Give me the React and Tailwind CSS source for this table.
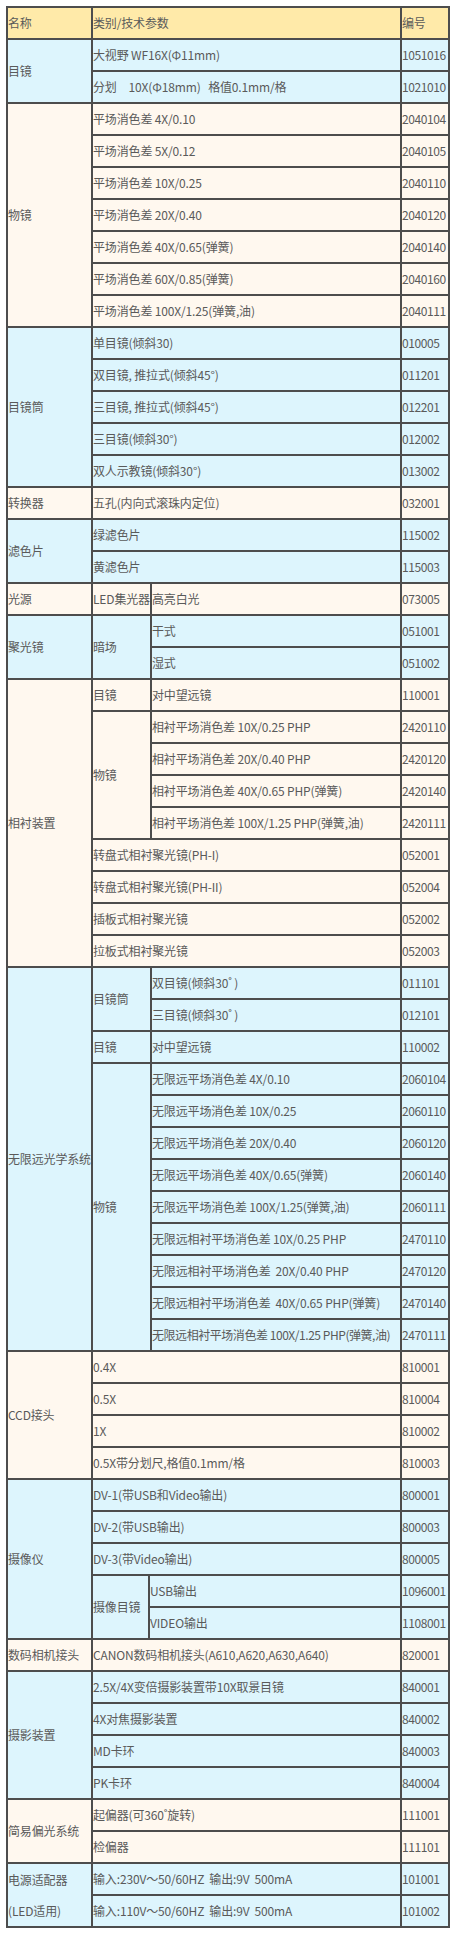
import React from "react";

const BLUE = "bg-[#ddf5fd]";
const CREAM = "bg-[#fff8ef]";

const cell =
  "box-border border border-[#4d4d4d] flex items-center whitespace-pre leading-[16px]";

const groups = [
  {
    name: ["目镜"],
    bg: BLUE,
    items: [
      ["大视野 WF16X(Φ11mm)", "1051016"],
      ["分划　10X(Φ18mm)   格值0.1mm/格", "1021010"],
    ],
  },
  {
    name: ["物镜"],
    bg: CREAM,
    items: [
      ["平场消色差 4X/0.10", "2040104"],
      ["平场消色差 5X/0.12", "2040105"],
      ["平场消色差 10X/0.25", "2040110"],
      ["平场消色差 20X/0.40", "2040120"],
      ["平场消色差 40X/0.65(弹簧)", "2040140"],
      ["平场消色差 60X/0.85(弹簧)", "2040160"],
      ["平场消色差 100X/1.25(弹簧,油)", "2040111"],
    ],
  },
  {
    name: ["目镜筒"],
    bg: BLUE,
    items: [
      ["单目镜(倾斜30)", "010005"],
      ["双目镜, 推拉式(倾斜45°)", "011201"],
      ["三目镜, 推拉式(倾斜45°)", "012201"],
      ["三目镜(倾斜30°)", "012002"],
      ["双人示教镜(倾斜30°)", "013002"],
    ],
  },
  {
    name: ["转换器"],
    bg: CREAM,
    items: [["五孔(内向式滚珠内定位)", "032001"]],
  },
  {
    name: ["滤色片"],
    bg: BLUE,
    items: [
      ["绿滤色片", "115002"],
      ["黄滤色片", "115003"],
    ],
  },
  {
    name: ["光源"],
    bg: CREAM,
    items: [{ sub: "LED集光器", w: "w-[59px]", rows: [["高亮白光", "073005"]] }],
  },
  {
    name: ["聚光镜"],
    bg: BLUE,
    items: [
      {
        sub: "暗场",
        w: "w-[59px]",
        rows: [
          ["干式", "051001"],
          ["湿式", "051002"],
        ],
      },
    ],
  },
  {
    name: ["相衬装置"],
    bg: CREAM,
    items: [
      { sub: "目镜", w: "w-[59px]", rows: [["对中望远镜", "110001"]] },
      {
        sub: "物镜",
        w: "w-[59px]",
        rows: [
          ["相衬平场消色差 10X/0.25 PHP", "2420110"],
          ["相衬平场消色差 20X/0.40 PHP", "2420120"],
          ["相衬平场消色差 40X/0.65 PHP(弹簧)", "2420140"],
          ["相衬平场消色差 100X/1.25 PHP(弹簧,油)", "2420111"],
        ],
      },
      ["转盘式相衬聚光镜(PH-I)", "052001"],
      ["转盘式相衬聚光镜(PH-II)", "052004"],
      ["插板式相衬聚光镜", "052002"],
      ["拉板式相衬聚光镜", "052003"],
    ],
  },
  {
    name: ["无限远光学系统"],
    bg: BLUE,
    items: [
      {
        sub: "目镜筒",
        w: "w-[59px]",
        rows: [
          ["双目镜(倾斜30˚ )", "011101"],
          ["三目镜(倾斜30˚ )", "012101"],
        ],
      },
      { sub: "目镜", w: "w-[59px]", rows: [["对中望远镜", "110002"]] },
      {
        sub: "物镜",
        w: "w-[59px]",
        rows: [
          ["无限远平场消色差 4X/0.10", "2060104"],
          ["无限远平场消色差 10X/0.25", "2060110"],
          ["无限远平场消色差 20X/0.40", "2060120"],
          ["无限远平场消色差 40X/0.65(弹簧)", "2060140"],
          ["无限远平场消色差 100X/1.25(弹簧,油)", "2060111"],
          ["无限远相衬平场消色差 10X/0.25 PHP", "2470110"],
          ["无限远相衬平场消色差  20X/0.40 PHP", "2470120"],
          ["无限远相衬平场消色差  40X/0.65 PHP(弹簧)", "2470140"],
          ["无限远相衬平场消色差 100X/1.25 PHP(弹簧,油)", "2470111", "tracking-[-0.45px]"],
        ],
      },
    ],
  },
  {
    name: ["CCD接头"],
    bg: CREAM,
    items: [
      ["0.4X", "810001"],
      ["0.5X", "810004"],
      ["1X", "810002"],
      ["0.5X带分划尺,格值0.1mm/格", "810003"],
    ],
  },
  {
    name: ["摄像仪"],
    bg: BLUE,
    items: [
      ["DV-1(带USB和Video输出)", "800001"],
      ["DV-2(带USB输出)", "800003"],
      ["DV-3(带Video输出)", "800005"],
      {
        sub: "摄像目镜",
        w: "w-[57px]",
        rows: [
          ["USB输出", "1096001"],
          ["VIDEO输出", "1108001"],
        ],
      },
    ],
  },
  {
    name: ["数码相机接头"],
    bg: CREAM,
    items: [["CANON数码相机接头(A610,A620,A630,A640)", "820001"]],
  },
  {
    name: ["摄影装置"],
    bg: BLUE,
    items: [
      ["2.5X/4X变倍摄影装置带10X取景目镜", "840001"],
      ["4X对焦摄影装置", "840002"],
      ["MD卡环", "840003"],
      ["PK卡环", "840004"],
    ],
  },
  {
    name: ["简易偏光系统"],
    bg: CREAM,
    items: [
      ["起偏器(可360˚旋转)", "111001"],
      ["检偏器", "111101"],
    ],
  },
  {
    name: ["电源适配器", "(LED适用)"],
    bg: BLUE,
    items: [
      ["输入:230V～50/60HZ  输出:9V  500mA", "101001"],
      ["输入:110V～50/60HZ  输出:9V  500mA", "101002"],
    ],
  },
];

function Leaf({ text, code, bg, extra }) {
  return (
    <div className="flex h-[32px]">
      <div className={`${cell} ${bg} flex-1 min-w-0 overflow-hidden ${extra || ""}`}>{text}</div>
      <div className={`${cell} ${bg} w-[48px] shrink-0 tracking-[-0.4px] overflow-hidden`}>{code}</div>
    </div>
  );
}

function Group({ g }) {
  return (
    <div className="flex">
      <div className={`${cell} ${g.bg} w-[85px] shrink-0 flex-col !items-start justify-center`}>
        {g.name.length > 1 ? (
          g.name.map((n, i) => (
            <div key={i} className="leading-[31px]">
              {n}
            </div>
          ))
        ) : (
          <div>{g.name[0]}</div>
        )}
      </div>
      <div className="flex flex-1 min-w-0 flex-col">
        {g.items.map((it, i) =>
          Array.isArray(it) ? (
            <Leaf key={i} text={it[0]} code={it[1]} extra={it[2]} bg={g.bg} />
          ) : (
            <div key={i} className="flex">
              <div className={`${cell} ${g.bg} ${it.w} shrink-0`}>{it.sub}</div>
              <div className="flex flex-1 min-w-0 flex-col">
                {it.rows.map((r, j) => (
                  <Leaf key={j} text={r[0]} code={r[1]} extra={r[2]} bg={g.bg} />
                ))}
              </div>
            </div>
          )
        )}
      </div>
    </div>
  );
}

export default function App() {
  return (
    <div
      className="min-h-[1938px] bg-white pt-[6px] pl-[6px] text-[12px] text-[#5a5a5a] tracking-[-0.15px]"
      style={{ fontFamily: '"Noto Sans CJK SC", "Noto Sans", sans-serif' }}
    >
      <div className="box-border w-[444px] border border-[#4d4d4d] flex flex-col">
        <div className="flex h-[32px]">
          <div className={`${cell} bg-[#ffeaa9] w-[85px] shrink-0`}>名称</div>
          <div className={`${cell} bg-[#ffeaa9] flex-1`}>类别/技术参数</div>
          <div className={`${cell} bg-[#ffeaa9] w-[48px] shrink-0`}>编号</div>
        </div>
        {groups.map((g, i) => (
          <Group key={i} g={g} />
        ))}
      </div>
    </div>
  );
}
